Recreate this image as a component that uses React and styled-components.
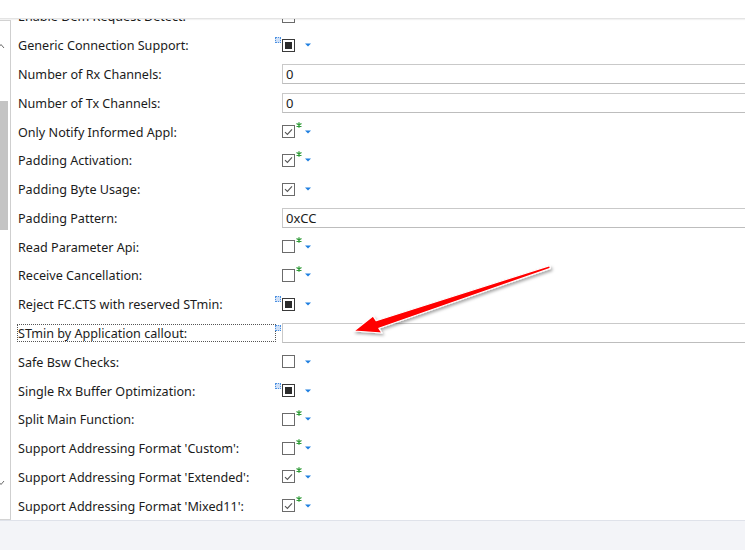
import React from "react";
import styled, { createGlobalStyle } from "styled-components";

const Global = createGlobalStyle`
  html, body { margin: 0; padding: 0; background: #ffffff; }
  body { font-family: "Noto Sans", "Open Sans", sans-serif; }
`;

const Page = styled.div`
  position: relative;
  width: 745px;
  height: 550px;
  display: flex;
  flex-direction: column;
  overflow: hidden;
  background: #ffffff;
`;

const TopBar = styled.div`
  height: 18px;
  flex: none;
  background: #ffffff;
  border-bottom: 1px solid #e4e4e4;
  box-shadow: 0 1px 1px rgba(0, 0, 0, 0.05);
  position: relative;
  z-index: 2;
`;

const Main = styled.div`
  flex: 1;
  display: flex;
  min-height: 0;
  overflow: hidden;
`;

const ScrollPanel = styled.div`
  width: 11px;
  flex: none;
  margin-top: 1px;
  border-top: 1px solid #d4d4d4;
  border-right: 1px solid #cfcfcf;
  border-bottom: 1px solid #d4d4d4;
  display: flex;
  flex-direction: column;
  align-items: flex-start;
  box-sizing: border-box;
  background: #ffffff;
`;

const Chevron = styled.div`
  height: 14px;
  margin-top: ${(p) => p.$mt}px;
  display: flex;
  align-items: center;
  margin-left: -3px;
`;

const Thumb = styled.div`
  width: 8px;
  height: 129px;
  margin-top: ${(p) => p.$mt}px;
  background: #c4c4c4;
`;

const List = styled.div`
  flex: 1;
  margin-top: -17px;
  display: flex;
  flex-direction: column;
`;

const Row = styled.div`
  height: 28.8px;
  display: grid;
  grid-template-columns: 265px 1fr;
  align-items: center;
  padding-left: 6px;
`;

const Label = styled.div`
  font-size: 12.6px;
  color: #1b1b1b;
  white-space: nowrap;
  height: 18px;
  line-height: 17px;
  box-sizing: border-box;
  width: ${(p) => (p.$focus ? "259px" : "auto")};
  border: 1px dotted ${(p) => (p.$focus ? "#555" : "transparent")};
`;

const Control = styled.div`
  position: relative;
  display: flex;
  align-items: center;
  height: 100%;
`;

const Box = styled.div`
  position: relative;
  width: 13px;
  height: 13px;
  box-sizing: border-box;
  border: 1px solid ${(p) => (p.$dark ? "#3a3a3a" : "#6b6b6b")};
  background: #fff;
  display: flex;
  align-items: center;
  justify-content: center;
  flex: none;
`;

const Fill = styled.div`
  width: 7px;
  height: 7px;
  background: #2b2b2b;
`;

const Marker = styled.div`
  position: absolute;
  left: -7px;
  top: 50%;
  margin-top: -8px;
  width: 4px;
  height: 4px;
  border: 1px dotted #4a8fe0;
  background: #cfe0f7;
  box-sizing: content-box;
`;

const Star = styled.svg`
  position: absolute;
  left: 13px;
  top: -4px;
`;

const Drop = styled.svg`
  margin-left: ${(p) => p.$ml}px;
  flex: none;
`;

const Input = styled.div`
  height: 20px;
  width: 600px;
  box-sizing: border-box;
  border: 1px solid #c9c9c9;
  border-bottom-color: #bdbdbd;
  font-size: 13px;
  line-height: 18px;
  padding-left: 3px;
  color: #1b1b1b;
  font-family: "Noto Sans", "Open Sans", sans-serif;
  background: #fff;
`;

const Footer = styled.div`
  height: 29px;
  flex: none;
  background: #f3f4f8;
  border-top: 1px solid #dfe2ea;
`;

const Overlay = styled.svg`
  position: absolute;
  left: 0;
  top: 0;
  pointer-events: none;
  z-index: 5;
`;

const rows = [
  { label: "Enable Dem Request Detect:", type: "check", state: "off" },
  { label: "Generic Connection Support:", type: "check", state: "ind", marker: true },
  { label: "Number of Rx Channels:", type: "input", value: "0" },
  { label: "Number of Tx Channels:", type: "input", value: "0" },
  { label: "Only Notify Informed Appl:", type: "check", state: "on", star: true },
  { label: "Padding Activation:", type: "check", state: "on", star: true },
  { label: "Padding Byte Usage:", type: "check", state: "on" },
  { label: "Padding Pattern:", type: "input", value: "0xCC" },
  { label: "Read Parameter Api:", type: "check", state: "off", star: true },
  { label: "Receive Cancellation:", type: "check", state: "off", star: true },
  { label: "Reject FC.CTS with reserved STmin:", type: "check", state: "ind", marker: true },
  { label: "STmin by Application callout:", type: "input", value: "", marker: true, focus: true },
  { label: "Safe Bsw Checks:", type: "check", state: "off" },
  { label: "Single Rx Buffer Optimization:", type: "check", state: "ind", marker: true },
  { label: "Split Main Function:", type: "check", state: "off", star: true },
  { label: "Support Addressing Format 'Custom':", type: "check", state: "off", star: true },
  { label: "Support Addressing Format 'Extended':", type: "check", state: "on", star: true },
  { label: "Support Addressing Format 'Mixed11':", type: "check", state: "on", star: true },
];

const Check = () => (
  <svg width="9" height="8" viewBox="0 0 9 8">
    <path d="M1 4.2 L3.4 6.4 L8 1.4" fill="none" stroke="#555" strokeWidth="1.1" />
  </svg>
);

const StarIcon = () => (
  <Star width="6" height="6" viewBox="0 0 6 6">
    <path d="M3 0.3 V5.7 M0.5 1.6 L5.5 4.4 M0.5 4.4 L5.5 1.6" stroke="#2e9a36" strokeWidth="1.2" />
  </Star>
);

const DropIcon = ({ ml }) => (
  <Drop $ml={ml} width="6" height="4" viewBox="0 0 6 4">
    <path d="M0 0.5 H6 L3 3.5 Z" fill="#1f7fe0" />
  </Drop>
);

function RowView({ r }) {
  return (
    <Row>
      <Label $focus={r.focus}>{r.label}</Label>
      <Control>
        {r.marker && <Marker />}
        {r.type === "input" ? (
          <Input>{r.value}</Input>
        ) : (
          <>
            <Box $dark={r.state === "ind"}>
              {r.state === "ind" && <Fill />}
              {r.state === "on" && <Check />}
              {r.star && <StarIcon />}
            </Box>
            <DropIcon ml={10} />
          </>
        )}
      </Control>
    </Row>
  );
}

export default function App() {
  return (
    <>
      <Global />
      <Page>
        <TopBar />
        <Main>
          <ScrollPanel>
            <Chevron $mt={18}>
              <svg width="8" height="6" viewBox="0 0 8 6">
                <path d="M1 5 L4 1.5 L7 5" fill="none" stroke="#6a6a6a" strokeWidth="1" />
              </svg>
            </Chevron>
            <Thumb $mt={48} />
            <Chevron $mt={246}>
              <svg width="8" height="6" viewBox="0 0 8 6">
                <path d="M1 1 L4 4.5 L7 1" fill="none" stroke="#6a6a6a" strokeWidth="1" />
              </svg>
            </Chevron>
          </ScrollPanel>
          <List>
            {rows.map((r) => (
              <RowView key={r.label} r={r} />
            ))}
          </List>
        </Main>
        <Footer />
        <Overlay width="745" height="550" viewBox="0 0 745 550">
          <defs>
            <filter id="sh" x="-20%" y="-50%" width="140%" height="200%">
              <feDropShadow dx="1.5" dy="2" stdDeviation="1.5" floodColor="#000" floodOpacity="0.35" />
            </filter>
          </defs>
          <polygon
            points="354,331 382,333 378.9,328.3 550.3,268.4 549.7,265.6 376.1,320.7 373,316"
            fill="#ff0000"
            stroke="#ffffff"
            strokeWidth="1.2"
            strokeLinejoin="round"
            filter="url(#sh)"
          />
        </Overlay>
      </Page>
    </>
  );
}
